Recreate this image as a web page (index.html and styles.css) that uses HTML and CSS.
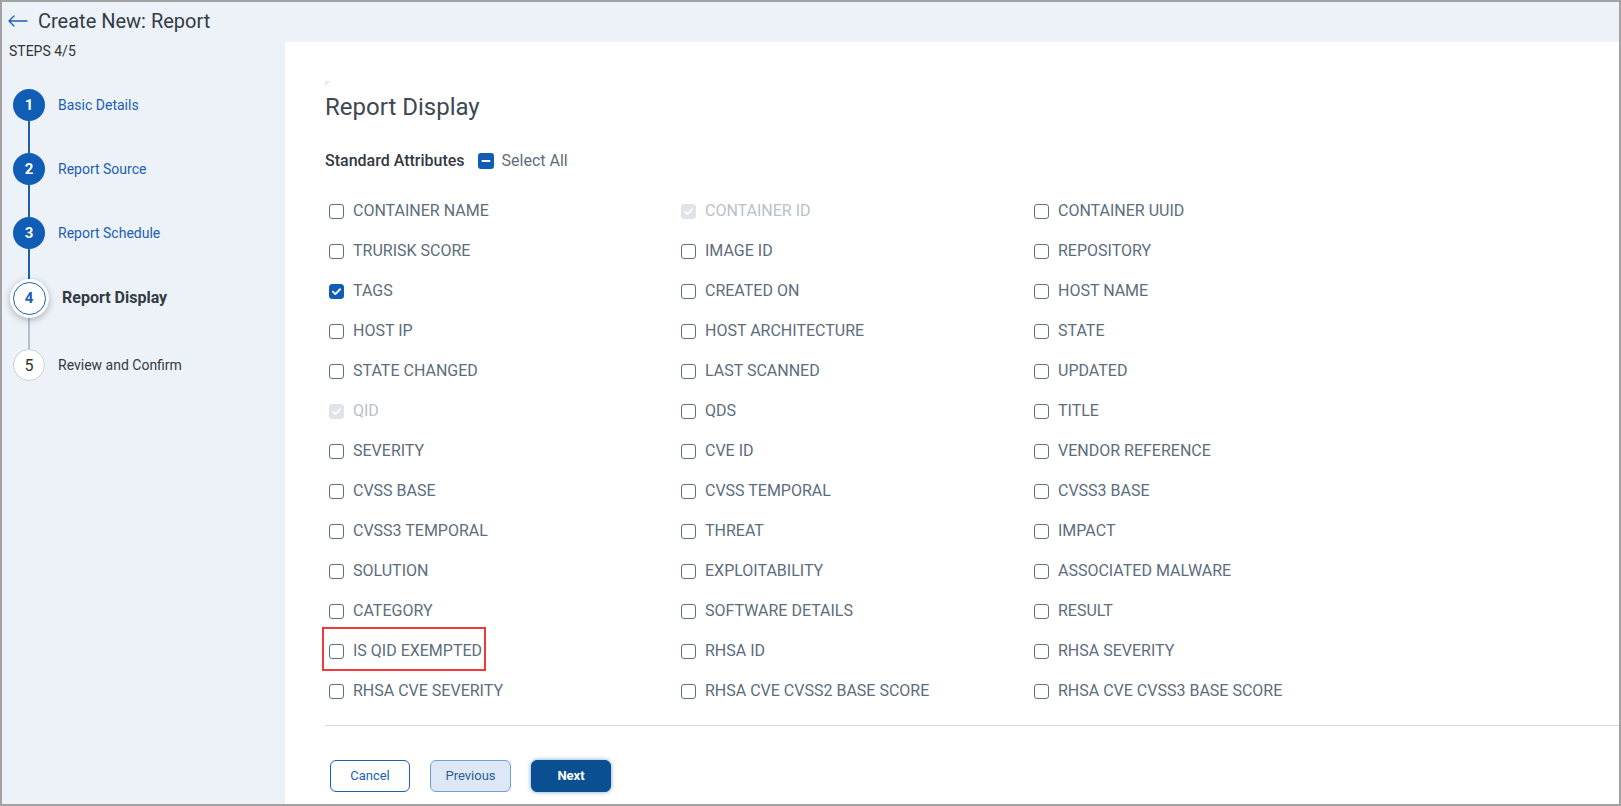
FILE: index.html
```html
<!DOCTYPE html>
<html lang="en">
<head>
<meta charset="utf-8">
<title>Create New: Report</title>
<link rel="stylesheet" href="styles.css">
</head>
<body>
<div class="app">
  <header class="topbar">
    <svg class="back" viewBox="0 0 20 12" width="20" height="12"><path d="M1 6H19M1 6L6 1M1 6L6 11" fill="none" stroke="#1a5fb4" stroke-width="1.3" stroke-linecap="round" stroke-linejoin="round"/></svg>
    <h1 class="title">Create New: Report</h1>
  </header>
  <div class="body">
    <aside class="sidebar">
      <div class="steps-label">STEPS 4/5</div>
      <ol class="steps">
        <li class="step done first">
          <div class="marker"><span class="line top"></span><span class="circle">1</span><span class="line blue"></span></div>
          <span class="label">Basic Details</span>
        </li>
        <li class="step done">
          <div class="marker"><span class="line blue"></span><span class="circle">2</span><span class="line blue"></span></div>
          <span class="label">Report Source</span>
        </li>
        <li class="step done">
          <div class="marker"><span class="line blue"></span><span class="circle">3</span><span class="line blue"></span></div>
          <span class="label">Report Schedule</span>
        </li>
        <li class="step current">
          <div class="marker"><span class="line blue"></span><span class="circle">4</span><span class="line gray"></span></div>
          <span class="label">Report Display</span>
        </li>
        <li class="step todo last">
          <div class="marker"><span class="line gray"></span><span class="circle">5</span><span class="line top"></span></div>
          <span class="label">Review and Confirm</span>
        </li>
      </ol>
    </aside>
    <main class="main">
      <div class="deco"></div>
      <h2 class="page-title">Report Display</h2>
      <div class="attr-head">
        <span class="attr-title">Standard Attributes</span>
        <span class="cb indet"><svg viewBox="0 0 16 16" width="16" height="16"><path d="M4.5 8H11.5" stroke="#fff" stroke-width="2" stroke-linecap="round"/></svg></span>
        <span class="select-all">Select All</span>
      </div>
      <div class="grid">
        <label class="item"><span class="cb"></span>CONTAINER NAME</label>
        <label class="item disabled"><span class="cb"><svg viewBox="0 0 16 16" width="15" height="15"><path d="M4.2 8.2L6.8 10.8L11.8 5.6" fill="none" stroke="#fff" stroke-width="1.8" stroke-linecap="round" stroke-linejoin="round"/></svg></span>CONTAINER ID</label>
        <label class="item"><span class="cb"></span>CONTAINER UUID</label>

        <label class="item"><span class="cb"></span>TRURISK SCORE</label>
        <label class="item"><span class="cb"></span>IMAGE ID</label>
        <label class="item"><span class="cb"></span>REPOSITORY</label>

        <label class="item checked"><span class="cb"><svg viewBox="0 0 16 16" width="15" height="15"><path d="M4.2 8.2L6.8 10.8L11.8 5.6" fill="none" stroke="#fff" stroke-width="2" stroke-linecap="round" stroke-linejoin="round"/></svg></span>TAGS</label>
        <label class="item"><span class="cb"></span>CREATED ON</label>
        <label class="item"><span class="cb"></span>HOST NAME</label>

        <label class="item"><span class="cb"></span>HOST IP</label>
        <label class="item"><span class="cb"></span>HOST ARCHITECTURE</label>
        <label class="item"><span class="cb"></span>STATE</label>

        <label class="item"><span class="cb"></span>STATE CHANGED</label>
        <label class="item"><span class="cb"></span>LAST SCANNED</label>
        <label class="item"><span class="cb"></span>UPDATED</label>

        <label class="item disabled"><span class="cb"><svg viewBox="0 0 16 16" width="15" height="15"><path d="M4.2 8.2L6.8 10.8L11.8 5.6" fill="none" stroke="#fff" stroke-width="1.8" stroke-linecap="round" stroke-linejoin="round"/></svg></span>QID</label>
        <label class="item"><span class="cb"></span>QDS</label>
        <label class="item"><span class="cb"></span>TITLE</label>

        <label class="item"><span class="cb"></span>SEVERITY</label>
        <label class="item"><span class="cb"></span>CVE ID</label>
        <label class="item"><span class="cb"></span>VENDOR REFERENCE</label>

        <label class="item"><span class="cb"></span>CVSS BASE</label>
        <label class="item"><span class="cb"></span>CVSS TEMPORAL</label>
        <label class="item"><span class="cb"></span>CVSS3 BASE</label>

        <label class="item"><span class="cb"></span>CVSS3 TEMPORAL</label>
        <label class="item"><span class="cb"></span>THREAT</label>
        <label class="item"><span class="cb"></span>IMPACT</label>

        <label class="item"><span class="cb"></span>SOLUTION</label>
        <label class="item"><span class="cb"></span>EXPLOITABILITY</label>
        <label class="item"><span class="cb"></span>ASSOCIATED MALWARE</label>

        <label class="item"><span class="cb"></span>CATEGORY</label>
        <label class="item"><span class="cb"></span>SOFTWARE DETAILS</label>
        <label class="item"><span class="cb"></span>RESULT</label>

        <label class="item highlight"><span class="cb"></span>IS QID EXEMPTED</label>
        <label class="item"><span class="cb"></span>RHSA ID</label>
        <label class="item"><span class="cb"></span>RHSA SEVERITY</label>

        <label class="item"><span class="cb"></span>RHSA CVE SEVERITY</label>
        <label class="item"><span class="cb"></span>RHSA CVE CVSS2 BASE SCORE</label>
        <label class="item"><span class="cb"></span>RHSA CVE CVSS3 BASE SCORE</label>
      </div>
      <footer class="actions">
        <button class="btn btn-cancel">Cancel</button>
        <button class="btn btn-prev">Previous</button>
        <button class="btn btn-next">Next</button>
      </footer>
    </main>
  </div>
</div>
</body>
</html>
```

FILE: styles.css
```css
* { box-sizing: border-box; }

html, body {
  margin: 0;
  padding: 0;
  background: #ffffff;
}

body {
  font-family: Roboto, "Liberation Sans", Arial, sans-serif;
  color: #333d47;
}

.app {
  width: 1621px;
  height: 806px;
  border: 2px solid #a2a2a2;
  display: flex;
  flex-direction: column;
  overflow: hidden;
}

/* Top bar */
.topbar {
  height: 40px;
  flex: 0 0 40px;
  background: #edf2f9;
  display: flex;
  align-items: center;
  padding: 0 0 3px 6px;
}

.back {
  display: block;
  margin-right: 10px;
}

.title {
  margin: 0;
  font-size: 20px;
  line-height: 24px;
  font-weight: 400;
  color: #333d47;
}

/* Body */
.body {
  flex: 1;
  display: flex;
  min-height: 0;
}

.sidebar {
  width: 283px;
  flex: 0 0 283px;
  background: #edf2f9;
  padding: 1px 0 0 7px;
}

.steps-label {
  font-size: 14px;
  line-height: 17px;
  color: #333;
}

.steps {
  list-style: none;
  margin: 13px 0 0 4px;
  padding: 0;
}

.step {
  display: flex;
  align-items: stretch;
  height: 64px;
}

.step.current { height: 66px; }
.step.last { height: 68px; }

.marker {
  width: 32px;
  display: flex;
  flex-direction: column;
  align-items: center;
}

.line {
  flex: 1;
  width: 2px;
  background: transparent;
}

.line.blue { background: #1a5fb4; }
.line.gray { background: #b4c0cc; }

.circle {
  width: 32px;
  height: 32px;
  border-radius: 50%;
  display: flex;
  align-items: center;
  justify-content: center;
  font-size: 15px;
  font-weight: 700;
  flex: 0 0 auto;
  position: relative;
}

.step.done .circle {
  background: #0f5db5;
  color: #fff;
}

.step.current .circle {
  width: 33px;
  height: 33px;
  margin: 2px 0;
  background: #fff;
  color: #1a5fb4;
  border: 1px solid #1a5fb4;
  box-shadow: 0 0 0 3px #fff, 0 2px 7px 3px rgba(0, 0, 0, 0.28);
}

.step.todo .circle {
  background: #fff;
  border: 1px solid #c8d1da;
  color: #333;
  font-weight: 400;
  font-size: 16px;
}

.label {
  align-self: center;
  margin-left: 13px;
  font-size: 14px;
  line-height: 18px;
  color: #1a5fb4;
}

.step.current .label {
  margin-left: 17px;
  font-size: 16px;
  font-weight: 700;
  color: #333a42;
}

.step.todo .label {
  color: #333a42;
}

/* Main */
.main {
  flex: 1;
  background: #fff;
  padding: 39px 0 0 40px;
  display: flex;
  flex-direction: column;
}

.deco {
  width: 6px;
  height: 6px;
  background: linear-gradient(135deg, #e6ebf1 50%, transparent 50%);
}

.page-title {
  margin: 6px 0 0 0;
  font-size: 24px;
  line-height: 28px;
  font-weight: 400;
  color: #3d4853;
}

.attr-head {
  display: flex;
  align-items: center;
  margin-top: 30px;
  height: 20px;
}

.attr-title {
  font-size: 16px;
  line-height: 20px;
  font-weight: 500;
  color: #333a42;
}

.cb {
  width: 15px;
  height: 15px;
  flex: 0 0 15px;
  border: 1.5px solid #5f6f7e;
  border-radius: 3px;
  background: #fff;
  display: flex;
  align-items: center;
  justify-content: center;
  overflow: hidden;
}

.cb svg { display: block; flex: 0 0 auto; }

.cb.indet {
  width: 16px;
  height: 16px;
  flex-basis: 16px;
  border: 0;
  background: #0f5db5;
  margin-left: 13px;
}

.select-all {
  margin-left: 8px;
  font-size: 16px;
  line-height: 20px;
  color: #5c6d7c;
}

.grid {
  margin-top: 20px;
  display: grid;
  grid-template-columns: 352px 353px 1fr;
  grid-auto-rows: 40px;
}

.item {
  justify-self: start;
  align-self: center;
  margin-left: 4px;
  height: 20px;
  display: flex;
  align-items: center;
  gap: 9px;
  font-size: 16px;
  line-height: 20px;
  color: #5c6d7c;
  white-space: nowrap;
}

.item.checked .cb {
  background: #0f5db5;
  border-color: #0f5db5;
}

.item.disabled { color: #b7c1ca; }

.item.disabled .cb {
  background: #dfe4e9;
  border-color: #dfe4e9;
}

.item.highlight { position: relative; }

.item.highlight::after {
  content: "";
  position: absolute;
  top: -14px;
  left: -7px;
  right: -4px;
  bottom: -10px;
  border: 2px solid #ef3b3b;
  pointer-events: none;
}

.actions {
  margin-top: 14px;
  border-top: 1px solid #d3d8de;
  padding: 34px 0 0 5px;
  display: flex;
  gap: 20px;
}

.btn {
  width: 80px;
  height: 32px;
  border-radius: 6px;
  font-family: Roboto, "Liberation Sans", Arial, sans-serif;
  font-size: 13px;
  line-height: 16px;
  padding: 0;
  cursor: pointer;
}

.btn-cancel {
  background: #fff;
  border: 1px solid #1a5fb4;
  color: #1a5fb4;
}

.btn-prev {
  width: 81px;
  background: #dce8f5;
  border: 1px solid #6f9fd3;
  color: #2f5d94;
}

.btn-next {
  background: #0b4f93;
  border: 1px solid #0b4f93;
  color: #fff;
  font-weight: 700;
  box-shadow: 0 0 4px rgba(11, 79, 147, 0.55);
}
```
